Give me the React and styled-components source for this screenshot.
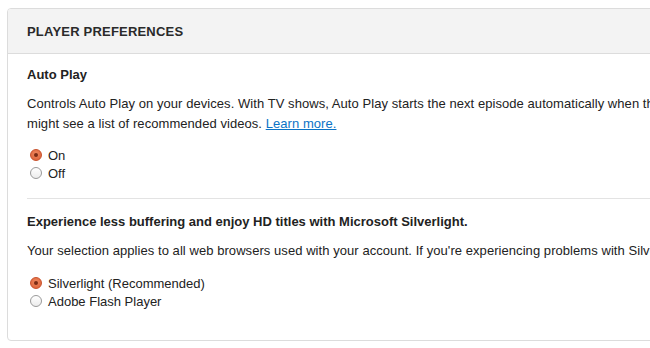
import React from "react";
import styled, { createGlobalStyle } from "styled-components";

const Global = createGlobalStyle`
  html, body { margin: 0; padding: 0; background: #fff; overflow: hidden; }
  body { font-family: "Liberation Sans", Arial, sans-serif; color: #222; }
`;

const Page = styled.div`
  padding: 8px 0 0 7px;
  width: 1000px;
`;

const Panel = styled.section`
  width: 900px;
  border: 1px solid #dcdcdc;
  border-radius: 4px;
  background: #fff;
  overflow: hidden;
`;

const Header = styled.header`
  background: #f3f3f3;
  border-bottom: 1px solid #dcdcdc;
  height: 44px;
  display: flex;
  align-items: center;
  padding: 0 19px;
  font-size: 13px;
  font-weight: bold;
  letter-spacing: 0.2px;
  color: #2a2a2a;
  text-transform: uppercase;
`;

const Body = styled.div`
  padding: 0 19px 30px;
`;

const Section = styled.div`
  padding: ${(p) => (p.$last ? "15px" : "13px")} 0 ${(p) => (p.$last ? "0" : "16px")};
  border-bottom: ${(p) => (p.$last ? "none" : "1px solid #e3e3e3")};
`;

const Title = styled.h3`
  margin: 0 0 11px;
  font-size: 13px;
  font-weight: bold;
  line-height: 16px;
  color: #222;
`;

const Text = styled.p`
  margin: 0 0 ${(p) => p.$gap || 12}px;
  font-size: 13px;
  line-height: 20px;
  letter-spacing: 0.06px;
  color: #222;
  white-space: nowrap;
`;

const Link = styled.a`
  color: #0b73c6;
  text-decoration: underline;
`;

const RadioList = styled.div`
  display: flex;
  flex-direction: column;
  padding-left: 3px;
`;

const RadioRow = styled.label`
  display: flex;
  align-items: center;
  gap: 6px;
  height: 18px;
  font-size: 13px;
  color: #222;
`;

const Dot = styled.span`
  width: 12px;
  height: 12px;
  box-sizing: border-box;
  border-radius: 50%;
  display: inline-flex;
  align-items: center;
  justify-content: center;
  border: 1px solid ${(p) => (p.$on ? "#c8502a" : "#9a9a9a")};
  background: ${(p) =>
    p.$on
      ? "radial-gradient(circle at 50% 40%, #f08a62 0%, #e06a40 70%, #d45a32 100%)"
      : "linear-gradient(#ffffff, #ececec)"};
  &::after {
    content: "";
    width: 4px;
    height: 4px;
    border-radius: 50%;
    background: ${(p) => (p.$on ? "#7a2b14" : "transparent")};
  }
`;

const Radio = ({ on, children }) => (
  <RadioRow>
    <Dot $on={on} />
    {children}
  </RadioRow>
);

export default function App() {
  return (
    <>
      <Global />
      <Page>
        <Panel>
          <Header>Player Preferences</Header>
          <Body>
            <Section>
              <Title>Auto Play</Title>
              <Text>
                Controls Auto Play on your devices. With TV shows, Auto Play starts the next episode automatically when the current one ends. With movies, you
                <br />
                might see a list of recommended videos. <Link href="#">Learn more.</Link>
              </Text>
              <RadioList>
                <Radio on>On</Radio>
                <Radio>Off</Radio>
              </RadioList>
            </Section>
            <Section $last>
              <Title>Experience less buffering and enjoy HD titles with Microsoft Silverlight.</Title>
              <Text $gap={13}>
                Your selection applies to all web browsers used with your account. If you're experiencing problems with Silverlight, try Adobe Flash Player.
              </Text>
              <RadioList>
                <Radio on>Silverlight (Recommended)</Radio>
                <Radio>Adobe Flash Player</Radio>
              </RadioList>
            </Section>
          </Body>
        </Panel>
      </Page>
    </>
  );
}
